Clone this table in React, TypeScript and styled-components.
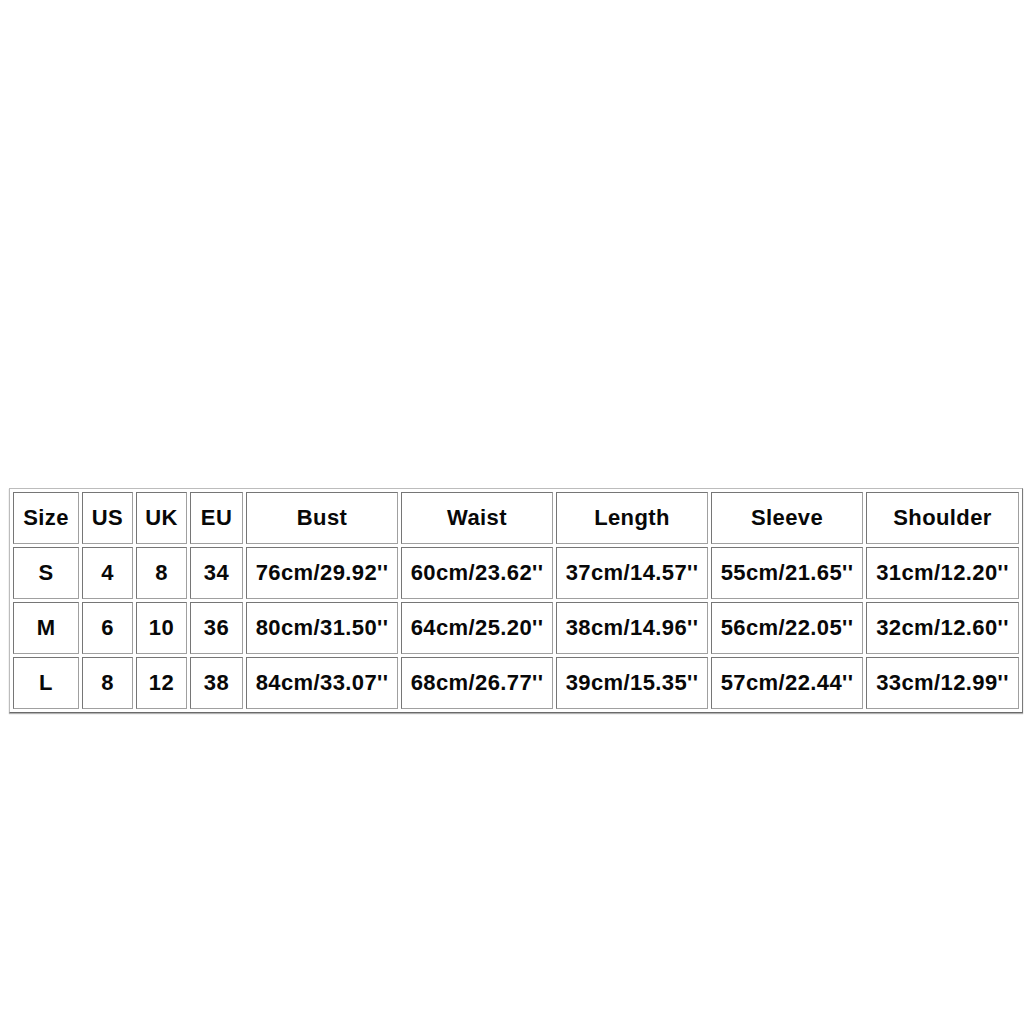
import React from "react"
import styled, { createGlobalStyle } from "styled-components"

const GlobalStyle = createGlobalStyle`
  html, body {
    margin: 0;
    padding: 0;
    background: #ffffff;
  }
`

const Page = styled.div`
  width: 1024px;
  height: 1024px;
  padding: 488px 0 0 9px;
  box-sizing: border-box;
  background: #ffffff;
`

const SizeTable = styled.table`
  width: 1014px;
  table-layout: fixed;
  border-collapse: separate;
  border-spacing: 3px;
  border: 1px solid #bcbcbc;
  border-right-color: #7a7a7a;
  border-bottom-color: #6a6a6a;
  box-shadow: 0 1px 1px rgba(0, 0, 0, 0.3);
`

const Cell = styled.td<{ $w: number }>`
  width: ${(p) => p.$w}px;
  height: 52px;
  box-sizing: border-box;
  padding: 0;
  border: 1px solid #767676;
  border-right-color: #a0a0a0;
  border-bottom-color: #a0a0a0;
  text-align: center;
  vertical-align: middle;
  font-family: "Liberation Sans", Arial, sans-serif;
  font-weight: bold;
  font-size: 22px;
  letter-spacing: 0.4px;
  color: #080808;
  white-space: nowrap;
  overflow: hidden;
`

const widths = [66, 51, 51, 53, 152, 152, 152, 152, 153]

const header = ["Size", "US", "UK", "EU", "Bust", "Waist", "Length", "Sleeve", "Shoulder"]

const rows = [
  ["S", "4", "8", "34", "76cm/29.92''", "60cm/23.62''", "37cm/14.57''", "55cm/21.65''", "31cm/12.20''"],
  ["M", "6", "10", "36", "80cm/31.50''", "64cm/25.20''", "38cm/14.96''", "56cm/22.05''", "32cm/12.60''"],
  ["L", "8", "12", "38", "84cm/33.07''", "68cm/26.77''", "39cm/15.35''", "57cm/22.44''", "33cm/12.99''"],
]

const App = () => {
  return (
    <>
      <GlobalStyle />
      <Page>
        <SizeTable>
          <tbody>
            {[header, ...rows].map((row, i) => (
              <tr key={i}>
                {row.map((value, j) => (
                  <Cell key={j} $w={widths[j]}>
                    {value}
                  </Cell>
                ))}
              </tr>
            ))}
          </tbody>
        </SizeTable>
      </Page>
    </>
  )
}

export default App
